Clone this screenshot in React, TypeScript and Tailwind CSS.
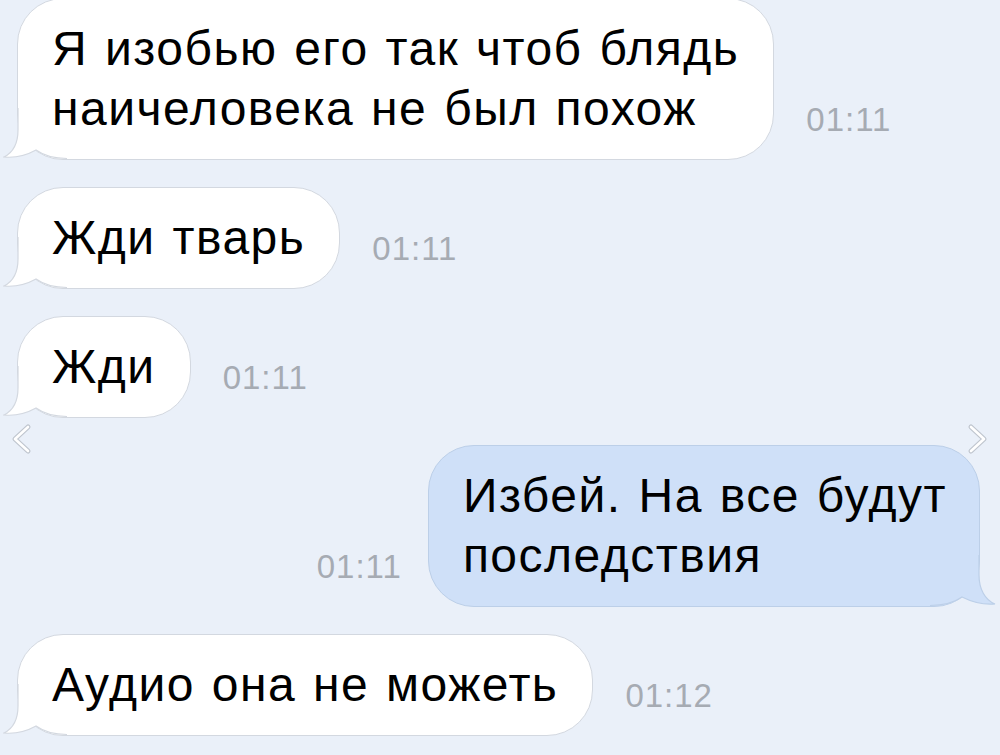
import React from 'react';

const FONT = { fontFamily: '"Liberation Sans", Arial, sans-serif' };

interface Msg {
  lines: string[];
  time: string;
  out?: boolean;
}

const messages: Msg[] = [
  { lines: ['Я изобью его так чтоб блядь', 'наичеловека не был похож'], time: '01:11' },
  { lines: ['Жди тварь'], time: '01:11' },
  { lines: ['Жди'], time: '01:11' },
  { lines: ['Избей. На все будут', 'последствия'], time: '01:11', out: true },
  { lines: ['Аудио она не можеть'], time: '01:12' },
];

const InTail = () => (
  <svg className="absolute left-[-15px] bottom-[-1px]" width="64" height="52" viewBox="0 0 64 52">
    <path d="M15 0 L15 22 C15 36 9 45 1 49 C12 50 24 47 33 42 C40 47 48 50.5 64 50.5 L64 0 Z" fill="#ffffff" />
    <path d="M15 0 L15 22 C15 36 9 45 1 49 C12 50 24 47 33 42 C40 47 48 50.5 64 50.5" fill="none" stroke="#d3d8e0" strokeWidth="1.2" />
  </svg>
);

const OutTail = () => (
  <svg className="absolute right-[-17px] bottom-[-1px]" width="66" height="52" viewBox="0 0 66 52">
    <path d="M49 0 L49 20 C49 34 55 45 65 49 C53 50 42 47 32 42 C25 47 17 50.5 0 50.5 L0 0 Z" fill="#cfe0f8" />
    <path d="M49 0 L49 20 C49 34 55 45 65 49 C53 50 42 47 32 42 C25 47 17 50.5 0 50.5" fill="none" stroke="#bccfe8" strokeWidth="1.2" />
  </svg>
);

const Time = ({ t }: { t: string }) => (
  <span className="mb-[24px] text-[33px] leading-[32px] font-light text-[#a6abb3] tracking-[1px]" style={FONT}>
    {t}
  </span>
);

const Bubble = ({ m }: { m: Msg }) => (
  <div
    className={
      m.out
        ? 'relative rounded-[46px] border border-[#bccfe8] bg-[#cfe0f8] pl-[34px] pr-[32px] py-[20px]'
        : 'relative rounded-[46px] border border-[#d3d8e0] bg-white pl-[34px] pr-[34px] py-[20px]'
    }
  >
    {m.out ? <OutTail /> : <InTail />}
    <div
      className="relative text-[48px] leading-[60px] tracking-[1.5px] [word-spacing:2px] text-black whitespace-nowrap"
      style={FONT}
    >
      {m.lines.map((l, i) => (
        <div key={i}>{l}</div>
      ))}
    </div>
  </div>
);

const Chevron = ({ right }: { right?: boolean }) => (
  <svg
    className={right ? 'absolute left-[963px] top-[422px]' : 'absolute left-[7px] top-[422px]'}
    width="30"
    height="34"
    viewBox="0 0 30 34"
  >
    <polyline
      points={right ? '8,5 21,17 8,29' : '21,5 8,17 21,29'}
      fill="none"
      stroke="#bfc5ce"
      strokeWidth="5"
      strokeLinecap="round"
      strokeLinejoin="round"
    />
    <polyline
      points={right ? '8,5 21,17 8,29' : '21,5 8,17 21,29'}
      fill="none"
      stroke="#ffffff"
      strokeWidth="2.6"
      strokeLinecap="round"
      strokeLinejoin="round"
    />
  </svg>
);

export default function App() {
  return (
    <div className="relative w-[1000px] h-[755px] overflow-hidden bg-[#eaf0f9]">
      <div className="flex flex-col gap-[27px] pl-[17px] pr-[20px] mt-[-2px]">
        {messages.map((m, i) =>
          m.out ? (
            <div key={i} className="flex items-end justify-end gap-[26px]">
              <Time t={m.time} />
              <Bubble m={m} />
            </div>
          ) : (
            <div key={i} className="flex items-end gap-[32px]">
              <Bubble m={m} />
              <Time t={m.time} />
            </div>
          )
        )}
      </div>
      <Chevron />
      <Chevron right />
    </div>
  );
}
